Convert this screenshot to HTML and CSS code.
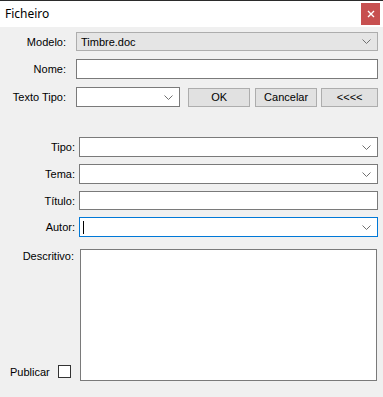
FILE: index.html
```html
<!DOCTYPE html>
<html lang="pt">
<head>
  <meta charset="UTF-8">
  <title>Ficheiro</title>
  <link rel="stylesheet" href="styles.css">
</head>
<body>
  <!-- Title bar -->
  <div class="titlebar">
    <span class="title">Ficheiro</span>
    <button class="close-btn" aria-label="Fechar">
      <svg width="8" height="8" viewBox="0 0 8 8"><path d="M1 1 L7 7 M7 1 L1 7" stroke="#fff" stroke-width="1.4"/></svg>
    </button>
  </div>

  <div class="form">
    <!-- Top section -->
    <div class="top">
      <div class="row">
        <label class="lbl">Modelo:</label>
        <div class="combo combo-ro">
          <span class="combo-text">Timbre.doc</span>
          <svg class="chev" width="9" height="5" viewBox="0 0 9 5"><path d="M0.5 0.5 L4.5 4.5 L8.5 0.5" fill="none" stroke="#707070"/></svg>
        </div>
      </div>
      <div class="row">
        <label class="lbl">Nome:</label>
        <div class="textbox"></div>
      </div>
      <div class="row">
        <label class="lbl">Texto Tipo:</label>
        <div class="actions">
          <div class="combo combo-small">
            <span class="combo-text"></span>
            <svg class="chev" width="9" height="5" viewBox="0 0 9 5"><path d="M0.5 0.5 L4.5 4.5 L8.5 0.5" fill="none" stroke="#707070"/></svg>
          </div>
          <button class="btn btn-ok">OK</button>
          <button class="btn btn-cancel">Cancelar</button>
          <button class="btn btn-back">&lt;&lt;&lt;&lt;</button>
        </div>
      </div>
    </div>

    <!-- Bottom section -->
    <div class="bottom">
      <div class="row">
        <label class="lbl">Tipo:</label>
        <div class="combo">
          <span class="combo-text"></span>
          <svg class="chev" width="9" height="5" viewBox="0 0 9 5"><path d="M0.5 0.5 L4.5 4.5 L8.5 0.5" fill="none" stroke="#707070"/></svg>
        </div>
      </div>
      <div class="row">
        <label class="lbl">Tema:</label>
        <div class="combo">
          <span class="combo-text"></span>
          <svg class="chev" width="9" height="5" viewBox="0 0 9 5"><path d="M0.5 0.5 L4.5 4.5 L8.5 0.5" fill="none" stroke="#707070"/></svg>
        </div>
      </div>
      <div class="row">
        <label class="lbl">Título:</label>
        <div class="textbox textbox-short"></div>
      </div>
      <div class="row">
        <label class="lbl">Autor:</label>
        <div class="combo combo-focus">
          <span class="caret"></span>
          <span class="combo-text"></span>
          <svg class="chev" width="9" height="5" viewBox="0 0 9 5"><path d="M0.5 0.5 L4.5 4.5 L8.5 0.5" fill="none" stroke="#707070"/></svg>
        </div>
      </div>
      <div class="row row-desc">
        <div class="desc-side">
          <label class="lbl lbl-desc">Descritivo:</label>
          <div class="publicar">
            <span>Publicar</span>
            <span class="checkbox"></span>
          </div>
        </div>
        <div class="textarea"></div>
      </div>
    </div>
  </div>
</body>
</html>
```

FILE: styles.css
```css
/* Window */
body {
  margin: 0;
  width: 383px;
  height: 397px;
  background: #f0f0f0;
  font-family: 'Liberation Sans', Arial, sans-serif;
  font-size: 11px;
  color: #000;
  overflow: hidden;
}

/* Title bar */
.titlebar {
  height: 26px;
  background: #fff;
  border-top: 1px solid #2b2b2b;
  display: flex;
  align-items: center;
  justify-content: space-between;
}

.title {
  font-family: 'Noto Sans', sans-serif;
  font-size: 12px;
  padding-left: 5px;
  margin-top: -1px;
}

.close-btn {
  width: 19px;
  height: 22px;
  margin-right: 3px;
  padding: 0;
  border: none;
  background: #c75050;
  display: flex;
  align-items: center;
  justify-content: center;
}

/* Form */
.form {
  padding-right: 5px;
}

.row {
  display: grid;
  align-items: center;
}

.lbl {
  text-align: right;
  white-space: nowrap;
}

.top {
  display: flex;
  flex-direction: column;
  gap: 8px;
  padding-top: 5px;
}

.top .row {
  grid-template-columns: 66px 302px;
  column-gap: 10px;
}

.bottom {
  display: flex;
  flex-direction: column;
  gap: 7px;
  padding-top: 30px;
}

.bottom .row {
  grid-template-columns: 75px 299px;
  column-gap: 4px;
}

/* Controls */
.textbox,
.combo {
  box-sizing: border-box;
  height: 20px;
  background: #fff;
  border: 1px solid #7a7a7a;
}

.textbox-short {
  height: 19px;
}

.combo {
  display: flex;
  align-items: center;
  padding: 0 6px 0 4px;
}

.combo-text {
  flex: 1;
}

.combo-ro {
  height: 19px;
  background: #e5e5e5;
  border-color: #adadad;
}

.combo-focus {
  border-color: #0078d7;
}

.caret {
  width: 1px;
  height: 13px;
  background: #000;
  margin-left: -1px;
}

.chev {
  display: block;
}

.actions {
  display: flex;
  align-items: center;
}

.combo-small {
  width: 105px;
  margin-right: 8px;
}

.btn {
  box-sizing: border-box;
  height: 19px;
  padding: 0;
  background: #e1e1e1;
  border: 1px solid #adadad;
  font-family: 'Liberation Sans', Arial, sans-serif;
  font-size: 11px;
  color: #000;
}

.btn-ok {
  width: 62px;
  margin-right: 5px;
}

.btn-cancel {
  width: 63px;
  margin-right: 4px;
}

.btn-back {
  width: 57px;
}

/* Descritivo area */
.bottom .row-desc {
  align-items: stretch;
  margin-top: 5px;
}

.desc-side {
  display: flex;
  flex-direction: column;
  justify-content: space-between;
}

.lbl-desc {
  margin-top: 1px;
  margin-right: 1px;
}

.publicar {
  display: flex;
  align-items: center;
  gap: 8px;
  padding-left: 10px;
  margin-bottom: 3px;
}

.checkbox {
  box-sizing: border-box;
  width: 13px;
  height: 13px;
  background: #fff;
  border: 1px solid #333;
}

.textarea {
  box-sizing: border-box;
  height: 132px;
  margin-left: 1px;
  width: 297px;
  background: #fff;
  border: 1px solid #7a7a7a;
}
```
